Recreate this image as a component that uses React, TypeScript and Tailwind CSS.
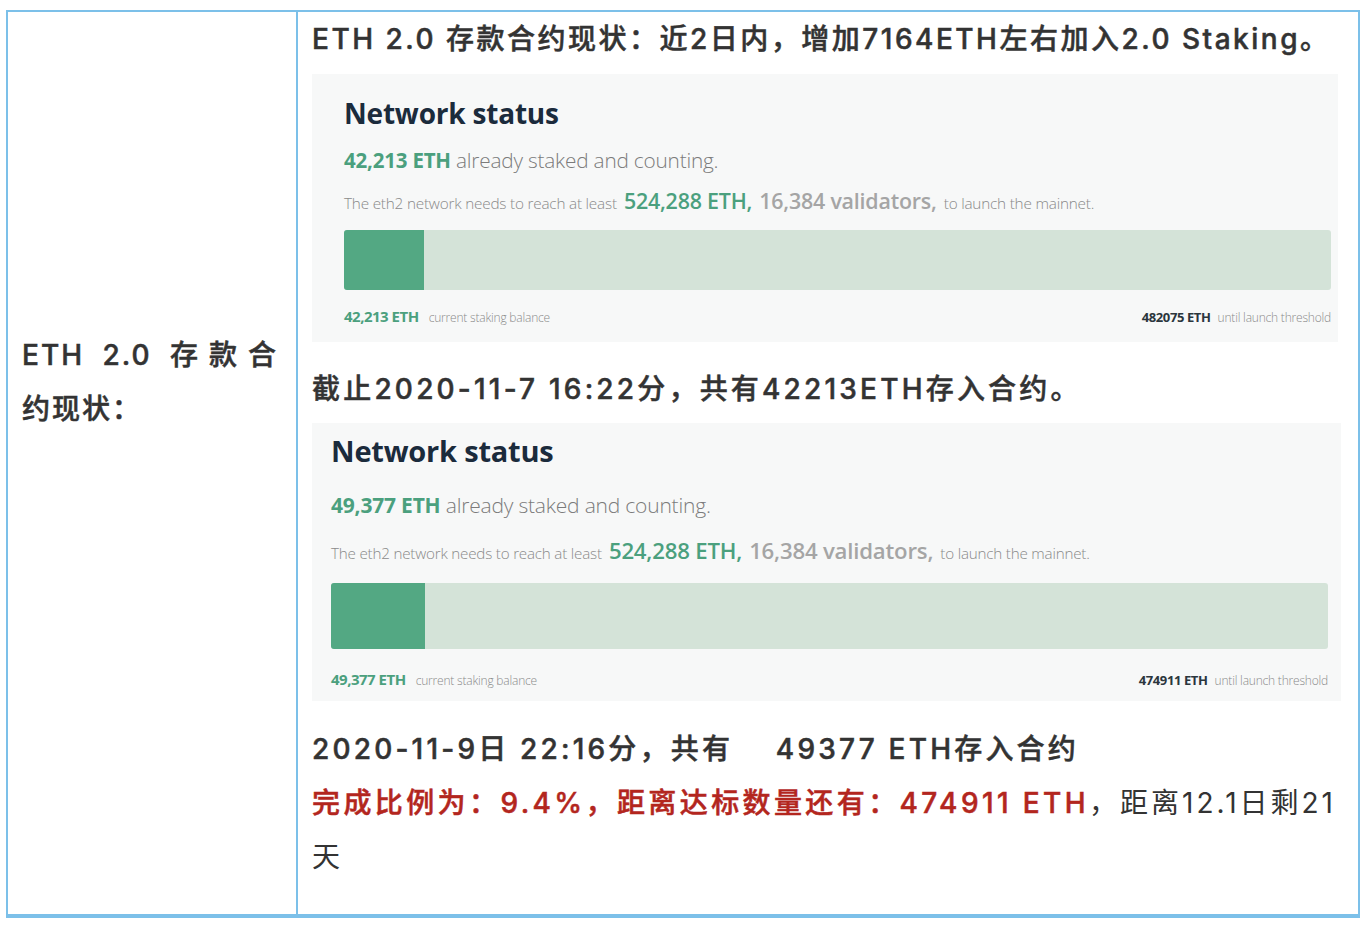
import { memo } from "react";

interface StatusData {
  staked: string;
  remaining: string;
  percent: number;
}

// two screenshots of the same page, captured at slightly different scales
const variants = {
  first: {
    box: "mt-[8px] w-[1026px] h-[268px] pl-[32px] pr-[7px] pt-[22px]",
    title: "text-[28px] leading-[34px]",
    line: "mt-[16px] text-[20.8px] leading-[28px]",
    lineBig: "text-[20.5px]",
    need: "mt-[10px] leading-[28px]",
    needSmall: "text-[15.3px]",
    needBig: "text-[21.4px]",
    bar: "mt-[13px] h-[60px]",
    foot: "mt-[12px] leading-[18px]",
  },
  second: {
    box: "mt-[7px] w-[1029px] h-[278px] pl-[19px] pr-[13px] pt-[9px]",
    title: "text-[29px] leading-[38px]",
    line: "mt-[20px] text-[21px] leading-[30px]",
    lineBig: "text-[21px]",
    need: "mt-[13px] leading-[30px]",
    needSmall: "text-[15.2px]",
    needBig: "text-[22.2px]",
    bar: "mt-[15px] h-[66px]",
    foot: "mt-[16px] leading-[18px]",
  },
};

function NetworkStatus({
  data,
  variant,
}: {
  data: StatusData;
  variant: keyof typeof variants;
}) {
  const v = variants[variant];
  return (
    <div
      className={`${v.box} bg-[#f7f8f8] font-['Open_Sans',sans-serif] tracking-[-0.2px]`}
    >
      <h2 className={`${v.title} font-bold text-[#1b2b3c]`}>Network status</h2>
      <p className={`${v.line} text-[#7b7b7b] font-light`}>
        <span className={`${v.lineBig} font-bold text-[#4ba07e]`}>
          {data.staked} ETH
        </span>{" "}
        already staked and counting.
      </p>
      <p className={`${v.need} text-[#8a8a8a] font-light`}>
        <span className={v.needSmall}>
          The eth2 network needs to reach at least
        </span>{" "}
        <span className={`${v.needBig} font-semibold text-[#4ba07e]`}>
          524,288 ETH,
        </span>{" "}
        <span className={`${v.needBig} font-semibold text-[#a5a5a5]`}>
          16,384 validators,
        </span>{" "}
        <span className={v.needSmall}>to launch the mainnet.</span>
      </p>
      <div className={`${v.bar} flex rounded-[3px] overflow-hidden bg-[#d4e3d8]`}>
        <div
          className="h-full bg-[#53a883]"
          style={{ width: `${data.percent}%` }}
        />
      </div>
      <div className={`${v.foot} flex justify-between items-baseline`}>
        <span>
          <span className="text-[15px] font-bold text-[#4ba07e] tracking-[-0.5px]">
            {data.staked} ETH
          </span>{" "}
          <span className="text-[12px] text-[#8a8a8a] font-light ml-[3px]">
            current staking balance
          </span>
        </span>
        <span>
          <span className="text-[13px] font-bold text-[#2b363d] tracking-[-0.4px]">
            {data.remaining} ETH
          </span>{" "}
          <span className="text-[12px] text-[#8a8a8a] font-light">
            until launch threshold
          </span>
        </span>
      </div>
    </div>
  );
}

function App() {
  return (
    <div className="min-h-[934px] bg-white pt-[10px] pl-[6px] font-['Inter','Noto_Sans_CJK_SC',sans-serif] text-[#333333]">
      <div className="flex w-[1354px] border-2 border-b-4 border-[#7cc0e9]">
        {/* left label cell */}
        <div className="w-[290px] shrink-0 border-r-2 border-[#7cc0e9] pl-[14px] pr-[18px] pt-[316px] text-[28px] leading-[54px] font-medium tracking-[2px] [-webkit-text-stroke:0.5px_currentColor]">
          <p className="text-justify [text-align-last:justify]">ETH 2.0 存款合</p>
          <p>约现状：</p>
        </div>

        {/* right content cell */}
        <div className="flex-1 pl-[14px] pr-[12px] pb-[30px] text-[28px] leading-[54px] tracking-[2.5px]">
          <p className="font-medium [-webkit-text-stroke:0.5px_currentColor]">
            ETH 2.0 存款合约现状：近2日内，增加7164ETH左右加入2.0 Staking。
          </p>
          <NetworkStatus
            variant="first"
            data={{ staked: "42,213", remaining: "482075", percent: 8.1 }}
          />
          <p className="mt-[20px] font-medium tracking-[3.2px] [-webkit-text-stroke:0.5px_currentColor]">
            截止2020-11-7 16:22分，共有42213ETH存入合约。
          </p>
          <NetworkStatus
            variant="second"
            data={{ staked: "49,377", remaining: "474911", percent: 9.4 }}
          />
          <p className="mt-[21px] font-medium whitespace-pre tracking-[3.2px] [-webkit-text-stroke:0.5px_currentColor]">
            2020-11-9日 22:16分，共有    49377 ETH存入合约
          </p>
          <p className="whitespace-nowrap">
            <span className="font-medium text-[#b3261e] tracking-[3.4px] [-webkit-text-stroke:0.5px_currentColor]">
              完成比例为：9.4%，距离达标数量还有：474911 ETH
            </span>
            <span className="tracking-[3px]">，距离12.1日剩21</span>
            <br />天
          </p>
        </div>
      </div>
    </div>
  );
}

export default memo(App);
